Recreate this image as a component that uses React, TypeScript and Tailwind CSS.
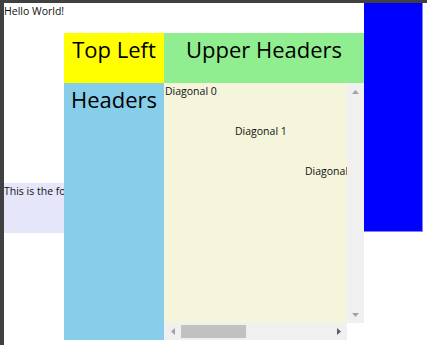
const diagonals = ["Diagonal 0", "Diagonal 1", "Diagonal 2", "Diagonal 3"];
const offsets = ["ml-0", "ml-[70px]", "ml-[140px]", "ml-[210px]"];

function Arrow({ dir, color }: { dir: "up" | "down" | "left" | "right"; color: string }) {
  const points = {
    up: "0,4 7,4 3.5,0",
    down: "0,0 7,0 3.5,4",
    left: "4,0 4,7 0,3.5",
    right: "0,0 0,7 4,3.5",
  }[dir];
  const vertical = dir === "up" || dir === "down";
  return (
    <svg width={vertical ? 7 : 4} height={vertical ? 4 : 7} viewBox={vertical ? "0 0 7 4" : "0 0 4 7"}>
      <polygon points={points} fill={color} />
    </svg>
  );
}

export default function App() {
  return (
    <div className="w-[427px] h-[345px] bg-white border-t-[3px] border-l-4 border-[#404040] overflow-hidden font-['Open_Sans',sans-serif] text-[10.5px] leading-[16px] text-[#111]">
      <div className="grid">
        <div className="[grid-area:1/1] self-start">Hello World!</div>

        <div className="[grid-area:1/1] self-start mt-[180px] w-[360px] h-[50px] bg-[#e6e6fa] whitespace-nowrap">
          This is the footer text that runs behind the grid
        </div>

        <div className="[grid-area:1/1] self-start ml-[360px] w-[59px] h-[229px] bg-[#0000ff] border-r border-b border-[#8080ff]" />

        <div className="[grid-area:1/1] self-start ml-[60px] mt-[30px] grid grid-cols-[100px_200px] grid-rows-[50px_257px]">
          <div className="bg-[#ffff00] text-center text-[22px] leading-[33px] text-black">Top Left</div>
          <div className="bg-[#90ee90] text-center text-[22px] leading-[33px] text-black">Upper Headers</div>
          <div className="bg-[#87ceeb] text-center text-[22px] leading-[33px] text-black">Headers</div>

          <div className="grid grid-cols-[183px_17px] grid-rows-[240px_17px]">
            <div className="bg-[#f5f5dc] overflow-hidden flex flex-col">
              {diagonals.map((label, i) => (
                <div key={label} className={`${offsets[i]} h-[40px] w-[70px] shrink-0 pl-px whitespace-nowrap`}>
                  {label}
                </div>
              ))}
            </div>

            <div className="bg-[#f0f0f0] flex flex-col justify-between items-center">
              <div className="h-[17px] flex items-center justify-center">
                <Arrow dir="up" color="#a3a3a3" />
              </div>
              <div className="h-[17px] flex items-center justify-center">
                <Arrow dir="down" color="#a3a3a3" />
              </div>
            </div>

            <div className="bg-[#f0f0f0] flex items-center">
              <div className="w-[17px] h-[17px] flex items-center justify-center">
                <Arrow dir="left" color="#a3a3a3" />
              </div>
              <div className="flex-1 h-[17px] py-[2px]">
                <div className="w-[65px] h-full bg-[#c1c1c1]" />
              </div>
              <div className="w-[17px] h-[17px] flex items-center justify-center">
                <Arrow dir="right" color="#606060" />
              </div>
            </div>

            <div className="bg-white" />
          </div>
        </div>
      </div>
    </div>
  );
}
